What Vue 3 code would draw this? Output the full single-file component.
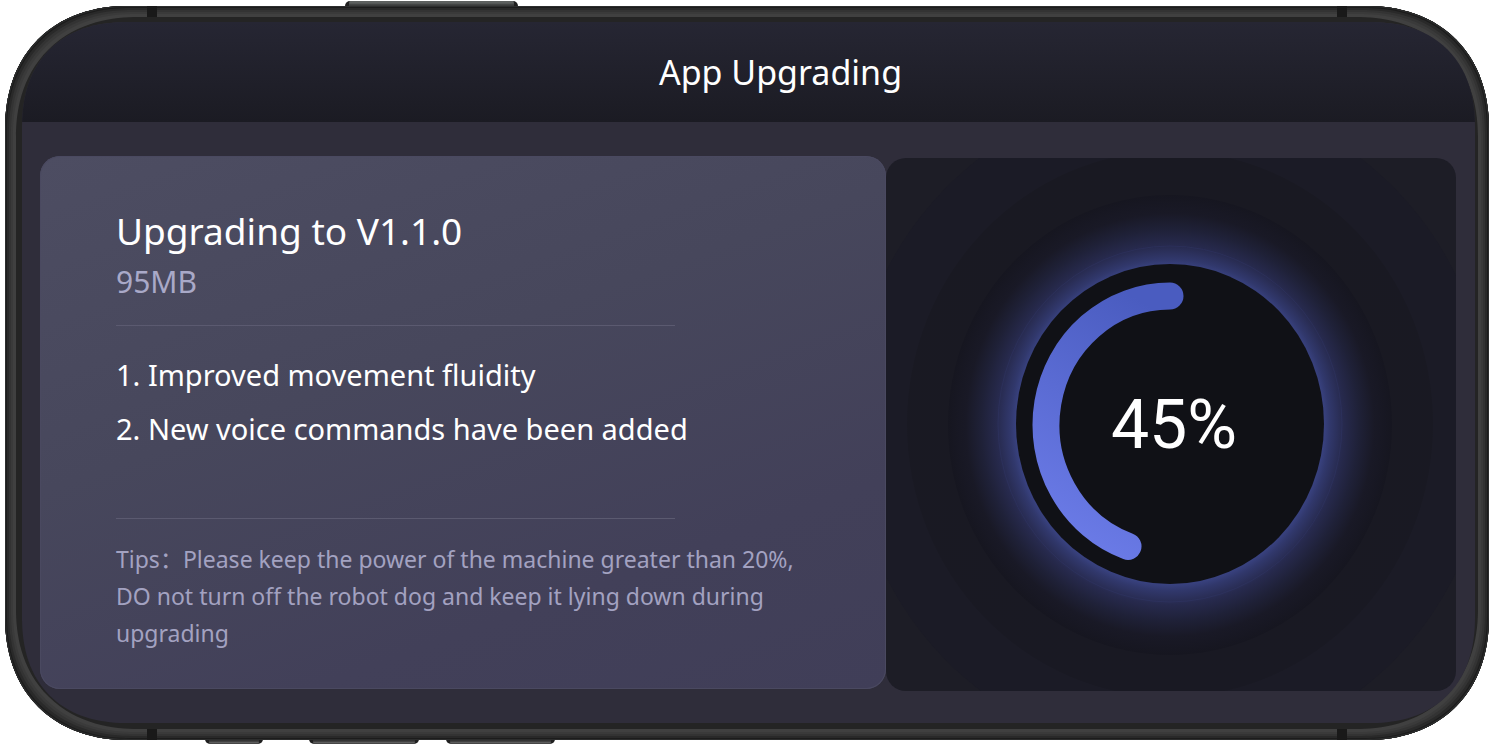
<script setup>
import { computed, ref } from 'vue'

const version = ref('V1.1.0')
const size = ref('95MB')
const progress = ref(45)
const changes = ['Improved movement fluidity', 'New voice commands have been added']

// The arc starts at twelve o'clock and runs counter-clockwise.
const center = { x: 284, y: 267 }
const radius = { x: 124, y: 129 }
const arc = computed(() => {
  const angle = (progress.value / 100) * Math.PI * 2 - 0.01 * Math.PI
  const endX = center.x - radius.x * Math.sin(angle)
  const endY = center.y - radius.y * Math.cos(angle)
  const large = angle > Math.PI ? 1 : 0
  return `M${center.x} ${center.y - radius.y}A${radius.x} ${radius.y} 0 ${large} 0 ${endX} ${endY}`
})
</script>

<template>
  <div class="stage">
    <span class="key key-power"></span>
    <span class="key key-mute"></span>
    <span class="key key-up"></span>
    <span class="key key-down"></span>

    <div class="phone">
      <span class="band band-tl"></span>
      <span class="band band-tr"></span>
      <span class="band band-bl"></span>
      <span class="band band-br"></span>

      <div class="screen">
        <header class="topbar">
          <h1>App Upgrading</h1>
        </header>

        <main class="content">
          <section class="card info">
            <h2>Upgrading to {{ version }}</h2>
            <p class="size">{{ size }}</p>
            <hr />
            <ol class="changes">
              <li v-for="(change, i) in changes" :key="change">{{ i + 1 }}. {{ change }}</li>
            </ol>
            <hr />
            <p class="tips">
              Tips：Please keep the power of the machine greater than 20%, DO not turn off the robot
              dog and keep it lying down during upgrading
            </p>
          </section>

          <section class="card dial">
            <svg viewBox="0 0 570 533" preserveAspectRatio="xMidYMid slice">
              <defs>
                <radialGradient id="glow">
                  <stop offset="0.68" stop-color="#3c4688" />
                  <stop offset="0.72" stop-color="#31386c" />
                  <stop offset="0.78" stop-color="#272a4e" />
                  <stop offset="0.85" stop-color="#1f2138" />
                  <stop offset="0.92" stop-color="#191926" />
                  <stop offset="1" stop-color="#161620" />
                </radialGradient>
                <linearGradient id="bar" x1="0.7" y1="0" x2="0.4" y2="1">
                  <stop offset="0" stop-color="#4a5cc0" />
                  <stop offset="1" stop-color="#6a7ae6" />
                </linearGradient>
                <linearGradient id="ring" x1="0" y1="0" x2="0" y2="1">
                  <stop offset="0" stop-color="#191922" />
                  <stop offset="1" stop-color="#191923" />
                </linearGradient>
              </defs>
              <ellipse cx="284" cy="266" rx="320" ry="331" fill="#1b1b26" />
              <ellipse cx="284" cy="266" rx="263" ry="273" fill="url(#ring)" />
              <ellipse cx="284" cy="267" rx="222" ry="230" fill="url(#glow)" />
              <ellipse cx="284" cy="266" rx="172" ry="178" fill="none" stroke="#343a70" stroke-opacity="0.3" />
              <ellipse cx="284" cy="266" rx="154" ry="160" fill="#101116" />
              <path :d="arc" fill="none" stroke="url(#bar)" stroke-width="27" stroke-linecap="round" />
              <text x="288" y="290" text-anchor="middle">{{ progress }}%</text>
            </svg>
          </section>
        </main>
      </div>
    </div>
  </div>
</template>

<style>
body {
  margin: 0;
  background: #fff;
}
</style>

<style scoped>
.stage {
  position: relative;
  box-sizing: border-box;
  min-height: 100vh;
  padding: 6px 9px 6px 5px;
  display: flex;
  font-family: "Noto Sans", "Noto Sans CJK SC", sans-serif;
  color: #fff;
}
.phone {
  position: relative;
  flex: 1;
  display: flex;
  padding: 16px 14px 17px 17px;
  border-radius: 108px;
  background: #242424;
  box-shadow:
    inset 0 0 0 1px #2c2d2d,
    inset 0 0 0 2px #1c1c1c,
    inset 0 0 0 4px #292929,
    inset 0 0 0 6px #333,
    inset 0 0 0 8px #3a3a3a,
    inset 0 0 0 11px #404040;
}
.screen {
  flex: 1;
  display: flex;
  flex-direction: column;
  overflow: hidden;
  border-radius: 88px;
  background: #2f2d3a;
}
@supports (corner-shape: superellipse(1.15)) {
  .phone {
    border-radius: 124px;
    corner-shape: superellipse(1.15);
  }
  .screen {
    border-radius: 106px;
    corner-shape: superellipse(1.2);
  }
}
.key {
  position: absolute;
  height: 6px;
  box-sizing: border-box;
  border: solid #1f1f1f;
  border-width: 0 4px;
}
.key-power {
  top: 1px;
  left: 345px;
  width: 173px;
  border-radius: 5px 5px 0 0;
  background: linear-gradient(#5d605f 0 2px, #3a3b3b 4px);
}
.key-mute,
.key-up,
.key-down {
  bottom: 2px;
  border-radius: 0 0 5px 5px;
  background: linear-gradient(#333 0 3px, #6a6a6a 5px, #222 6px);
}
.key-mute {
  left: 205px;
  width: 58px;
}
.key-up {
  left: 309px;
  width: 110px;
}
.key-down {
  left: 446px;
  width: 109px;
}
.band {
  position: absolute;
  width: 10px;
  height: 11px;
  background: #191919;
}
.band-tl,
.band-tr {
  top: 0;
}
.band-bl,
.band-br {
  bottom: 0;
}
.band-tl,
.band-bl {
  left: 142px;
}
.band-tr,
.band-br {
  right: 142px;
}
.topbar {
  height: 100px;
  box-sizing: border-box;
  padding-left: 64px;
  display: flex;
  align-items: center;
  justify-content: center;
  background: linear-gradient(#262633, #1b1b23);
}
h1,
h2,
p,
ol {
  margin: 0;
  padding: 0;
  font-weight: 400;
}
h1 {
  font-size: 34px;
  line-height: 48px;
}
.content {
  flex: 1;
  display: grid;
  grid-template-columns: 846fr 570fr;
  padding: 34px 19px 32px 18px;
}
.card {
  border-radius: 20px;
  overflow: hidden;
}
.info {
  margin-bottom: 2px;
  box-sizing: border-box;
  padding: 48px 62px 32px 76px;
  background: linear-gradient(160deg, #4d4d62, #47475c 40%, #424059 75%, #403e58);
  box-shadow: inset 0 0 0 1px #4a4960;
}
h2 {
  font-size: 37px;
  line-height: 54px;
}
.size {
  font-size: 30px;
  line-height: 48px;
  color: #a9a9c8;
}
hr {
  width: 79%;
  height: 1px;
  margin: 19px 0 18px;
  border: 0;
  background: #5b5a70;
}
.changes {
  height: 155px;
  padding-top: 4px;
  box-sizing: border-box;
  list-style: none;
  font-size: 29px;
  line-height: 54px;
}
.tips {
  padding-top: 4px;
  font-size: 23px;
  line-height: 37px;
  color: #a3a2c1;
}
.dial {
  margin-top: 2px;
  background: #1d1d26;
  display: grid;
}
.dial svg {
  width: 100%;
  height: 100%;
}
.dial text {
  font-family: Roboto, "Liberation Sans", sans-serif;
  font-size: 68px;
  fill: #fff;
}
</style>
